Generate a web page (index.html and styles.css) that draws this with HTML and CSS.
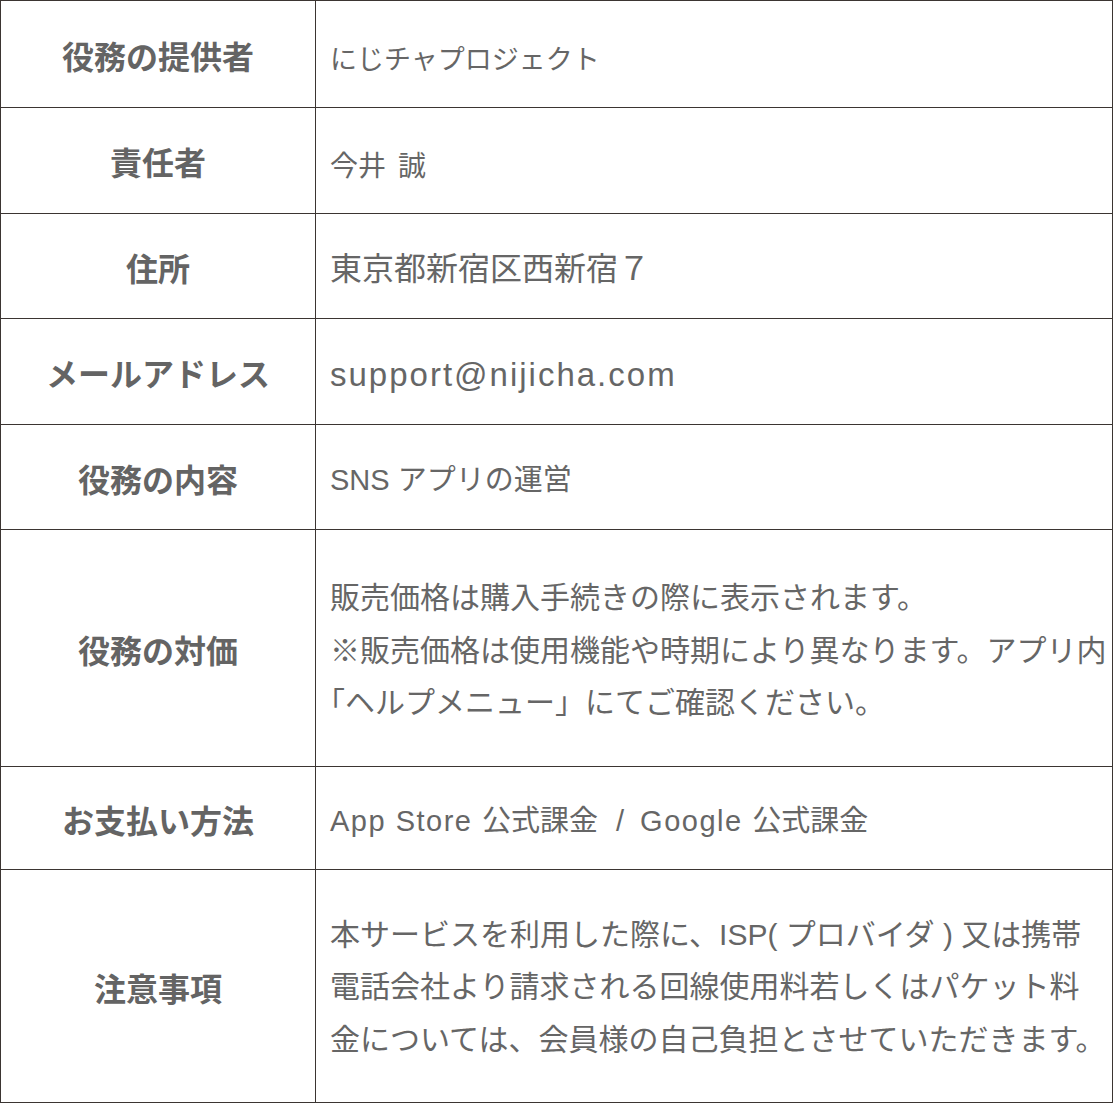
FILE: index.html
```html
<!DOCTYPE html>
<html lang="ja">
<head>
<meta charset="utf-8">
<title>特定商取引法に基づく表記</title>
<link rel="stylesheet" href="styles.css">
</head>
<body>
<div class="sheet">
  <div class="row h107">
    <div class="label">役務の提供者</div>
    <div class="value s27"><span class="txt">にじチャプロジェクト</span></div>
  </div>
  <div class="row h106">
    <div class="label">責任者</div>
    <div class="value s28"><span class="txt">今井<span class="gap"></span>誠</span></div>
  </div>
  <div class="row h105">
    <div class="label">住所</div>
    <div class="value s32 up"><span class="txt">東京都新宿区西新宿７</span></div>
  </div>
  <div class="row h106">
    <div class="label">メールアドレス</div>
    <div class="value mail"><span class="txt">support@nijicha.com</span></div>
  </div>
  <div class="row h105">
    <div class="label">役務の内容</div>
    <div class="value s29 up"><span class="txt">SNS アプリの運営</span></div>
  </div>
  <div class="row h237">
    <div class="label">役務の対価</div>
    <div class="value multi"><span class="txt">販売価格は購入手続きの際に表示されます。<br>※販売価格は使用機能や時期により異なります。アプリ内<br><span class="halt">「</span>ヘルプメニュー」にてご確認ください。</span></div>
  </div>
  <div class="row h103">
    <div class="label">お支払い方法</div>
    <div class="value s29 up"><span class="txt"><span class="latin">App Store </span>公式課金<span class="slash">/</span><span class="latin">Google </span>公式課金</span></div>
  </div>
  <div class="row h233">
    <div class="label">注意事項</div>
    <div class="value multi lift"><span class="txt">本サービスを利用した際に、ISP( プロバイダ ) 又は携帯<br>電話会社より請求される回線使用料若しくはパケット料<br>金については、会員様の自己負担とさせていただきます。</span></div>
  </div>
</div>
</body>
</html>
```

FILE: styles.css
```css
* {
  box-sizing: border-box;
}

html, body {
  margin: 0;
  padding: 0;
  background: #ffffff;
}

body {
  font-family: "Liberation Sans", "Noto Sans CJK JP", sans-serif;
  color: #666666;
}

.sheet {
  width: 1113px;
  border-top: 1px solid #3b3532;
  border-left: 1px solid #3b3532;
}

.row {
  display: grid;
  grid-template-columns: 315px 1fr;
}

.h107 { height: 107px; }
.h106 { height: 106px; }
.h105 { height: 105px; }
.h103 { height: 103px; }
.h237 { height: 237px; }
.h233 { height: 233px; }

.label,
.value {
  display: flex;
  align-items: center;
  border-right: 1px solid #3b3532;
  border-bottom: 1px solid #3b3532;
}

.label {
  justify-content: center;
  padding-top: 3px;
  font-family: "Noto Sans CJK JP", sans-serif;
  font-weight: 700;
  font-size: 32px;
  line-height: 1.3;
  color: #646464;
}

.value {
  padding-top: 6px;
  padding-left: 14px;
  white-space: nowrap;
  font-weight: 400;
}

.value.up {
  padding-top: 0;
}

.value.lift {
  padding-top: 3px;
}

.txt {
  display: block;
}

.s27 { font-size: 27px; }
.s28 { font-size: 28px; }
.s29 { font-size: 29px; }
.s32 { font-size: 32px; }

.gap {
  display: inline-block;
  width: 12px;
}

.latin {
  letter-spacing: 1.5px;
  white-space: pre;
}

.slash {
  margin: 0 16px 0 18px;
}

.halt {
  font-feature-settings: "halt";
}

.mail {
  font-size: 33px;
  letter-spacing: 2px;
}

.multi {
  font-size: 30px;
  line-height: 52.5px;
}
```
